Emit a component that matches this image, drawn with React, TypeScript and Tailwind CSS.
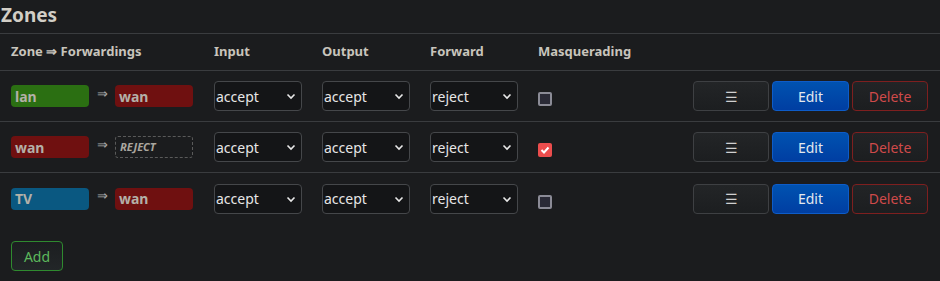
import React from 'react';

type Zone = { name: string; color: string };

const zones: { zone: Zone; dest: Zone | null; input: string; output: string; forward: string; masq: boolean }[] = [
  { zone: { name: 'lan', color: 'bg-[#2b6f12]' }, dest: { name: 'wan', color: 'bg-[#6f1010]' }, input: 'accept', output: 'accept', forward: 'reject', masq: false },
  { zone: { name: 'wan', color: 'bg-[#6f1010]' }, dest: null, input: 'accept', output: 'accept', forward: 'reject', masq: true },
  { zone: { name: 'TV', color: 'bg-[#0a5881]' }, dest: { name: 'wan', color: 'bg-[#6f1010]' }, input: 'accept', output: 'accept', forward: 'reject', masq: false },
];

const cols = 'grid grid-cols-[203px_108px_108px_108px_1fr_235px] pl-[11px] pr-[12px]';

const Badge: React.FC<{ zone: Zone }> = ({ zone }) => (
  <div className={`${zone.color} w-[78px] h-[22px] rounded-[4px] pl-[4px] flex items-center text-[14px] font-bold text-[#b4b0a8]`}>
    {zone.name}
  </div>
);

const Select: React.FC<{ value: string }> = ({ value }) => (
  <div className="relative w-[88px] h-[30px] rounded-[4px] border border-[#45474a] bg-[#141517] flex items-center pl-[1px] text-[14px] text-[#e6e6e6]">
    {value}
    <svg className="absolute right-[5px] top-[11px]" width="10" height="8" viewBox="0 0 10 8">
      <path d="M1.5 1.5 L5 5 L8.5 1.5" stroke="#e8e8e8" strokeWidth="1.6" fill="none" />
    </svg>
  </div>
);

const Checkbox: React.FC<{ checked: boolean }> = ({ checked }) =>
  checked ? (
    <div className="w-[14px] h-[14px] mt-[6px] rounded-[2px] bg-[#ec4d4d] flex items-center justify-center">
      <svg width="10" height="8" viewBox="0 0 10 8">
        <path d="M1.5 4 L4 6.5 L8.5 1.5" stroke="#fff" strokeWidth="2" fill="none" />
      </svg>
    </div>
  ) : (
    <div className="w-[14px] h-[14px] mt-[6px] rounded-[2px] border-2 border-[#8b8b96] bg-[#2a2a36]" />
  );

export default function App() {
  return (
    <div className="w-[940px] h-[281px] bg-[#1b1c1e] font-['Noto_Sans',sans-serif] text-[#c8c4bc]">
      <h2 className="h-[34px] text-[19px] font-bold leading-[31px] pl-[1px] text-[#d2cec6] border-b border-[#3a3c3f]">
        Zones
      </h2>
      <div className={`${cols} h-[37px] items-center text-[13px] font-bold border-b border-[#3a3c3f]`}>
        <div>Zone ⇒ Forwardings</div>
        <div>Input</div>
        <div>Output</div>
        <div>Forward</div>
        <div>Masquerading</div>
        <div />
      </div>
      {zones.map((z, i) => (
        <div key={i} className={`${cols} h-[51px] items-center ${i < zones.length - 1 ? 'border-b border-[#3a3c3f]' : ''}`}>
          <div className="flex items-center">
            <Badge zone={z.zone} />
            <span className="w-[26px] text-center text-[13px] text-[#a8a8a8] -mt-[5px]">⇒</span>
            {z.dest ? (
              <Badge zone={z.dest} />
            ) : (
              <div className="w-[78px] h-[22px] rounded-[3px] border border-dashed border-[#5a5a5a] pl-[4px] flex items-center text-[11px] italic font-bold text-[#aaa69e]">
                REJECT
              </div>
            )}
          </div>
          <Select value={z.input} />
          <Select value={z.output} />
          <Select value={z.forward} />
          <div>
            <Checkbox checked={z.masq} />
          </div>
          <div className="flex gap-[3px]">
            <button className="w-[76px] h-[30px] rounded-[4px] border border-[#3e4043] bg-gradient-to-b from-[#232527] to-[#1c1e20] text-[14px] text-[#d0d0d0]">
              ☰
            </button>
            <button className="w-[77px] h-[30px] rounded-[4px] border border-[#0e5cc8] bg-gradient-to-b from-[#0052b0] to-[#003ea2] text-[14px] text-[#e4e8ee]">
              Edit
            </button>
            <button className="w-[76px] h-[30px] rounded-[4px] border border-[#7e1f1f] bg-gradient-to-b from-[#222426] to-[#1c1e20] text-[14px] text-[#cf4a4a]">
              Delete
            </button>
          </div>
        </div>
      ))}
      <div className="pl-[11px] pt-[17px]">
        <button className="w-[52px] h-[30px] rounded-[4px] border border-[#2f8a2f] bg-gradient-to-b from-[#1c1e20] to-[#222628] text-[14px] text-[#5cb85c]">
          Add
        </button>
      </div>
    </div>
  );
}
